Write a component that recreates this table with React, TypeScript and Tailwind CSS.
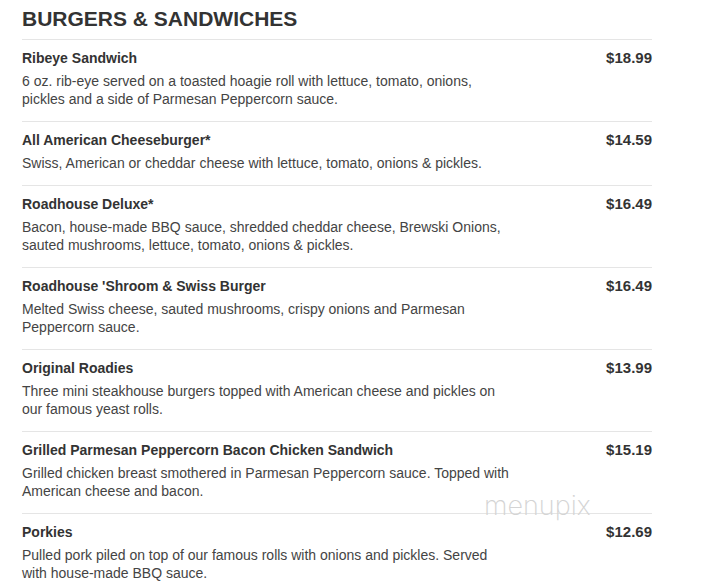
import React from "react";

const items = [
  {
    name: "Ribeye Sandwich",
    price: "$18.99",
    desc: "6 oz. rib-eye served on a toasted hoagie roll with lettuce, tomato, onions, pickles and a side of Parmesan Peppercorn sauce.",
  },
  {
    name: "All American Cheeseburger*",
    price: "$14.59",
    desc: "Swiss, American or cheddar cheese with lettuce, tomato, onions & pickles.",
  },
  {
    name: "Roadhouse Deluxe*",
    price: "$16.49",
    desc: "Bacon, house-made BBQ sauce, shredded cheddar cheese, Brewski Onions, sauted mushrooms, lettuce, tomato, onions & pickles.",
  },
  {
    name: "Roadhouse 'Shroom & Swiss Burger",
    price: "$16.49",
    desc: "Melted Swiss cheese, sauted mushrooms, crispy onions and Parmesan Peppercorn sauce.",
  },
  {
    name: "Original Roadies",
    price: "$13.99",
    desc: "Three mini steakhouse burgers topped with American cheese and pickles on our famous yeast rolls.",
  },
  {
    name: "Grilled Parmesan Peppercorn Bacon Chicken Sandwich",
    price: "$15.19",
    desc: "Grilled chicken breast smothered in Parmesan Peppercorn sauce. Topped with American cheese and bacon.",
  },
  {
    name: "Porkies",
    price: "$12.69",
    desc: "Pulled pork piled on top of our famous rolls with onions and pickles. Served with house-made BBQ sauce.",
  },
];

export default function App() {
  return (
    <div
      className="relative min-h-[588px] w-[717px] overflow-hidden bg-white pl-[22px]"
      style={{ fontFamily: '"Liberation Sans", Arial, sans-serif' }}
    >
      <div className="w-[630px]">
        <h1 className="pt-[7px] pb-[8px] text-[21px] font-bold leading-[24px] text-[#333]">
          BURGERS &amp; SANDWICHES
        </h1>
        {items.map((it) => (
          <div
            key={it.name}
            className="flex justify-between border-t border-[#e5e5e5] pt-2 pb-[13px]"
          >
            <div className="w-[490px]">
              <div className="text-[14px] font-bold leading-[20px] text-[#333]">
                {it.name}
              </div>
              <div className="mt-[4px] text-[14px] leading-[18px] text-[#444]">
                {it.desc}
              </div>
            </div>
            <div className="text-[15px] font-bold leading-[20px] text-[#333]">
              {it.price}
            </div>
          </div>
        ))}
      </div>
      <div
        className="pointer-events-none absolute left-[484px] top-[490px] text-[27px] font-extralight leading-[32px] text-[#d4d4d4]"
        style={{ fontFamily: "Inter, sans-serif" }}
      >
        menupix
      </div>
    </div>
  );
}
